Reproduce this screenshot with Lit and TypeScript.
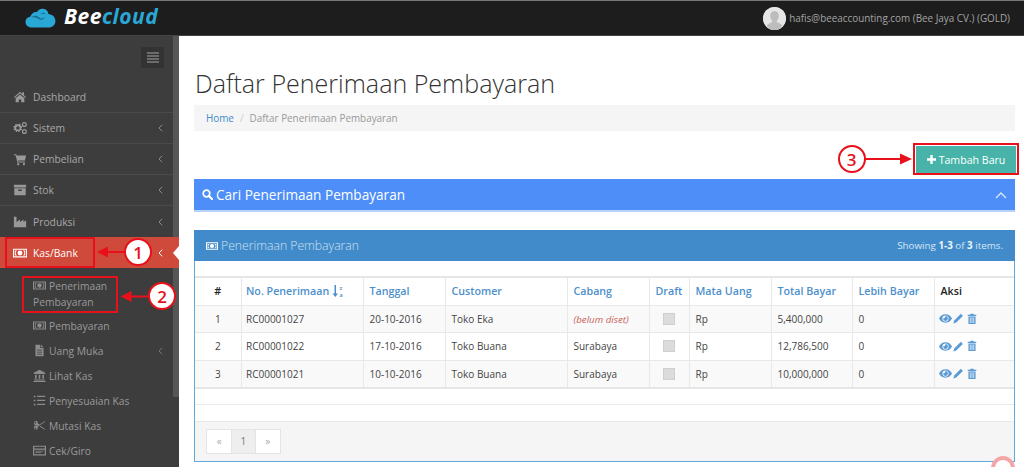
import { LitElement, html, css, svg } from "lit";
import { customElement } from "lit/decorators.js";

const ic = (vb: string, body: unknown, w = 14, h = 14) =>
  html`<svg class="ic" width=${w} height=${h} viewBox=${vb} fill="currentColor">${body}</svg>`;

const home = () => ic("0 0 16 16", svg`<path d="M8 2 1 8.200l.8.9L8 3.700l6.200 5.400.8-.9L12.500 6V2.500h-2v1.800zM3 9.500V14h3.600v-3.200h2.800V14H13V9.500L8 5.200z"/>`);
const cogs = () => ic("0 0 16 16", svg`<path fill-rule="evenodd" d="M5.500 3.500l1.200.3.8-.9 1.200.8-.4 1.100.8 1 1.200-.1.3 1.400-1.100.5-.1 1.200 1 .7-.7 1.200-1.200-.4-.9.8.1 1.200-1.400.3-.5-1.100H5l-.6 1.100-1.300-.4.1-1.200-.9-.8-1.100.5L.5 9.500l1-.8-.1-1.200L.3 7l.4-1.300 1.200.1.8-.9-.3-1.200 1.300-.5.6 1.100zM5.600 6a2 2 0 1 0 0 4 2 2 0 0 0 0-4z"/><circle cx="13" cy="4" r="2.200" fill="none" stroke="currentColor" stroke-width="1.400"/><circle cx="13" cy="12" r="2.200" fill="none" stroke="currentColor" stroke-width="1.400"/>`);
const cart = () => ic("0 0 16 16", svg`<path d="M1 2.500h2.600l.5 1.600H15l-1.400 5.600H5.700l.3 1.200h7.600v1.200H5L3 3.700H1z"/><circle cx="6" cy="14" r="1.300"/><circle cx="12.500" cy="14" r="1.300"/>`);
const archive = () => ic("0 0 16 16", svg`<path fill-rule="evenodd" d="M1 2h14v3H1zM1.500 6h13v8h-13zM6 7.500V9h4V7.500z"/>`);
const chart = () => ic("0 0 16 16", svg`<path d="M1 2h3v6l4-3v3l4-3v3l3-2v8H1z"/>`);
const money = () => ic("0 0 16 12", svg`<path fill-rule="evenodd" d="M0 1h16v10H0zM1.300 2.300v7.400h13.400V2.300zM8 3.200a2.800 2.800 0 1 1 0 5.600 2.800 2.800 0 0 1 0-5.600z"/><path d="M2.200 3.200h2.600a4 3.400 0 0 0 0 5.600H2.200zM11.200 3.200h2.600v5.600h-2.600a4 3.400 0 0 0 0-5.600z"/>`, 16, 12);
const file = () => ic("0 0 14 16", svg`<path fill-rule="evenodd" d="M2 1h6v4h4v10H2zM9 1l3 3H9zM4 7v1h6V7zm0 2.500v1h6v-1zM4 12v1h6v-1z"/>`);
const bank = () => ic("0 0 16 16", svg`<path d="M8 1 1 4.500V6h14V4.500zM2.500 7h2v5h-2zM7 7h2v5H7zM11.500 7h2v5h-2zM1.500 13h13v1.200h-13zM.5 14.800h15V16H.5z"/>`);
const list = () => ic("0 0 16 16", svg`<path d="M1 2h2v2H1zM5 2h10v1.600H5zM1 7h2v2H1zM5 7h10v1.600H5zM1 12h2v2H1zM5 12h10v1.600H5z"/>`);
const scissors = () => ic("0 0 16 16", svg`<path fill-rule="evenodd" d="M3.500 2a2.500 2.500 0 0 1 2.300 3.400L8 6.800l6-3.800h1.500L6 9.300l-.2.100.1.300A2.500 2.500 0 1 1 4.600 8.300L6.400 8 4.600 7.700A2.500 2.500 0 1 1 3.500 2zM3 3.500a1 1 0 1 0 0 2 1 1 0 0 0 0-2zm0 7a1 1 0 1 0 0 2 1 1 0 0 0 0-2zM9.500 8.500l6 4.500H14L8 9.300z"/>`);
const card = () => ic("0 0 16 14", svg`<path fill-rule="evenodd" d="M0 1h16v12H0zM1.500 2.500v2h13v-2zM1.500 6v5.500h13V6zM3 7.200h10v1H3zM3 9h7v1H3z"/>`);

const eye = () => ic("0 0 16 12", svg`<path fill-rule="evenodd" d="M8 .8C12 .8 14.800 3.400 16 6c-1.200 2.600-4 5.200-8 5.200S1.200 8.600 0 6C1.200 3.400 4 .8 8 .8zM8 2.200a3.800 3.800 0 1 0 0 7.600 3.800 3.800 0 0 0 0-7.600zM8 3a3 3 0 1 1-3 3c.5.400 3-.5 3-3z"/>`, 13, 11);
const pencil = () => ic("0 0 14 14", svg`<path d="M10.500.8 13.200 3.500 4.300 12.400.5 13.500l1.100-3.800z"/>`, 10.500, 11);
const trash = () => ic("0 0 14 16", svg`<path fill-rule="evenodd" d="M5 .8h4l.7 1.400H13v1.500H1V2.200h3.300zM2 4.500h10V15H2zM4 6v7.500h1V6zm2.500 0v7.500h1V6zM9 6v7.500h1V6z"/>`, 10, 12);
const chevL = () => html`<svg class="chev" width="5" height="8" viewBox="0 0 5 8"><path d="M4.200.7 1 4l3.200 3.300" fill="none" stroke="currentColor" stroke-width="1"/></svg>`;

const items = [
  { label: "Dashboard", icon: home, chev: false },
  { label: "Sistem", icon: cogs, chev: true },
  { label: "Pembelian", icon: cart, chev: true },
  { label: "Stok", icon: archive, chev: true },
  { label: "Produksi", icon: chart, chev: true },
];
const subs = [
  { label: "Pembayaran", icon: money, chev: false },
  { label: "Uang Muka", icon: file, chev: true },
  { label: "Lihat Kas", icon: bank, chev: false },
  { label: "Penyesuaian Kas", icon: list, chev: false },
  { label: "Mutasi Kas", icon: scissors, chev: false },
  { label: "Cek/Giro", icon: card, chev: false },
];
const rows = [
  { n: 1, no: "RC00001027", date: "20-10-2016", cust: "Toko Eka", cab: "", tot: "5,400,000" },
  { n: 2, no: "RC00001022", date: "17-10-2016", cust: "Toko Buana", cab: "Surabaya", tot: "12,786,500" },
  { n: 3, no: "RC00001021", date: "10-10-2016", cust: "Toko Buana", cab: "Surabaya", tot: "10,000,000" },
];

@customElement("app-root")
export class AppRoot extends LitElement {
  static styles = css`
    :host { display: block; position: relative; width: 1024px; height: 467px; overflow: hidden; background: #fff;
      font-family: "Open Sans", sans-serif; color: #333; font-size: 10.300px; }
    * { box-sizing: border-box; }
    .ic { display: block; flex: none; }
    .top { height: 36px; background: #1d1d1d; border-top: 1px solid #777; border-bottom: 1px solid #444; display: flex; align-items: center; padding: 0 14px 0 25px; }
    .logo { display: flex; align-items: center; gap: 8px; }
    .brand { font-size: 21px; font-weight: 700; font-style: italic; letter-spacing: .5px; color: #fff; line-height: 1; margin-top: -3px; }
    .brand span { color: #2aa7d5; }
    .user { margin-left: auto; display: flex; align-items: center; gap: 3px; color: #a3a3a3; font-size: 9.900px; }
    .avatar { width: 23px; height: 23px; border-radius: 50%; background: #ddd; overflow: hidden; }
    .wrap { display: flex; height: 431px; }
    .side { width: 179px; flex: none; background: #3d3d3d; display: flex; position: relative; }
    .rail { width: 173px; flex: none; color: #a8a8a8; }
    .bar { width: 6px; height: 361px; background: #565656; }
    .toggle { margin: 11px 0 14px 141px; width: 23px; height: 21px; background: #333; display: flex; flex-direction: column; gap: 1.500px; padding: 5px 5.500px; }
    .toggle i { display: block; height: 1.500px; background: #6c6c6c; }
    .nav { display: flex; align-items: center; height: 31px; padding: 0 10px 0 13px; border-bottom: 1px solid #4a4a4a; }
    .nav .ic { width: 14px; margin-right: 6px; color: #999; height: 14px; }
    .nav .chev { margin-left: auto; color: #8a8a8a; }
    .nav.last { border-bottom: none; }
    .active { width: 179px; background: #cf4a3a; color: #fff; border: none; padding-right: 16px; position: relative; }
    .active .ic { color: #fff; }
    .active .chev { color: #fff; }
    .notch { position: absolute; right: 0; top: 8.500px; width: 0; height: 0; border-top: 7px solid transparent; border-bottom: 7px solid transparent; border-right: 6px solid #fff; }
    .subs { padding-top: 6px; }
    .sub { display: flex; align-items: center; height: 25px; padding: 0 10px 0 33px; color: #9a9a9a; }
    .sub .ic { width: 13px; height: 13px; margin-right: 3px; color: #8c8c8c; }
    .sub .chev { margin-left: auto; color: #777; }
    .sub.two { display: block; height: 39px; padding: 4px 18px 0 33px; line-height: 16px; }
    .sub.two .ic { display: inline-block; vertical-align: -2px; }
    .main { flex: 1; padding: 31px 8px 0 15px; min-width: 0; }
    h1 { margin: 0 0 5px 1px; font-size: 25.050px; font-weight: 300; line-height: 33px; color: #333; }
    .crumb { height: 26px; margin-right: 1px; background: #f5f5f5; display: flex; align-items: center; padding: 0 12px; font-size: 9.900px; color: #999; gap: 6px; }
    .crumb a { color: #428bca; }
    .crumb .sep { color: #ccc; }
    .actions { display: flex; justify-content: flex-end; margin-top: 15px; }
    .add { width: 100px; height: 27px; background: #47b3a9; color: #fff; font-size: 10.600px; display: flex; align-items: center; justify-content: center; gap: 3px; }
    .search { margin: 6px 1px 0 0; height: 33px; background: #4d8ef8; border-bottom: 2px solid #b9d2f8; color: #fff; display: flex; align-items: center; padding: 0 8px; font-size: 13.600px; font-weight: 500; gap: 3px; }
    .search .up { margin-left: auto; }
    .panel { margin: 18px 1px 0 0; height: 232px; border: 1px solid #5fa9dc; border-top: none; display: flex; flex-direction: column; }
    .phead { height: 31px; background: #428bca; color: #cfe2f2; margin: 0 -1px; display: flex; align-items: center; padding: 0 12px; font-size: 12.200px; font-weight: 300; gap: 3px; flex: none; }
    .phead .mi { color: #fff; }
    .phead .mi .ic { width: 12px; height: 10px; }
    .phead .sum { margin-left: auto; font-size: 9.800px; font-weight: 400; color: #d6e6f4; }
    .phead b { font-weight: 700; color: #eef5fb; }
    .tbl { margin-top: 15px; flex: none; }
    table { border-collapse: collapse; width: 100%; table-layout: fixed; border-top: 2px solid #e6e6e6; border-bottom: 2px solid #e6e6e6; }
    th, td { border: 1px solid #e8e8e8; padding: 0 0 0 6px; font-size: 10px; text-align: left; white-space: nowrap; height: 27.500px; color: #444; }
    td.first, th.first { border-left: none; text-align: center; padding: 0; }
    tr > *:last-child { border-right: none; }
    th { height: 28px; font-size: 10.700px; font-weight: 600; color: #4d8fcc; }
    th.k { color: #222; }
    th.no, td.no { padding-left: 4.500px; }
    tbody tr:nth-child(odd) td { background: #f9f9f9; }
    .th-sort { display: inline-flex; align-items: center; gap: 3px; }
    td.nopad { padding: 0; }
    td.aksi { padding-left: 4px; }
    .red { color: #c9605a; font-style: italic; font-size: 9.700px; }
    .chk { display: block; margin: 0 auto; width: 12px; height: 12px; background: #dcdcdc; border: 1px solid #cfcfcf; }
    .acts { display: flex; color: #5b9bd5; align-items: center; }
    .acts .ic:nth-child(2) { margin: 0 3.500px 0 1.500px; }
    .foot { flex: 1; background: #f5f5f5; border-top: 1px solid #e8e8e8; padding: 7.500px 11px; }
    .gap1 { height: 16px; flex: none; border-bottom: 1px solid #eaeaea; }
    .gap2 { height: 16px; flex: none; }
    .pager { display: inline-flex; height: 24.500px; border: 1px solid #e4e4e4; background: #fff; color: #aaa; font-size: 10px; }
    .pager span { width: 24.300px; display: flex; align-items: center; justify-content: center; }
    .pager .cur { background: #eee; color: #777; border-left: 1px solid #e4e4e4; border-right: 1px solid #e4e4e4; }
    .box { position: absolute; border: 2px solid #e8101a; pointer-events: none; z-index: 5; }
    .num { position: absolute; z-index: 7; width: 28px; height: 28px; border-radius: 50%; border: 2.300px solid #e8101a; background: #fff; color: #e8101a; font-size: 17px; font-weight: 600; display: flex; align-items: center; justify-content: center; line-height: 1; }
    .over { position: absolute; left: 0; top: 0; pointer-events: none; z-index: 6; }
    .n1 { left: 124px; top: 238px; }
    .n2 { left: 148px; top: 282px; }
    .n3 { left: 837.500px; top: 145px; }
    .b1 { left: 5px; top: 237px; width: 90px; height: 31px; }
    .b2 { left: 22px; top: 276px; width: 96px; height: 37px; }
    .b3 { left: 913px; top: 143px; width: 106px; height: 32px; }
  `;

  render() {
    return html`
      <div class="top">
        <div class="logo">
          <svg width="31" height="20" viewBox="0 0 31 20"><path d="M7 19.500C3 19.500.500 17 .500 14c0-3 2.300-5 4.800-5.200C6.500 5.500 9 3.500 12 4c1-2 3-3.500 6-3.300 3.200.2 5.200 2.600 5.400 5.300 3.800.3 7 3 7 7 0 4-3 6.500-7 6.500z" fill="#29a8d6"/><path d="M6 9.500c3-2.500 6-2.500 8 0 2 1.500 4 1 6-.5-1.500 3-4.500 3.500-6.500 2-2.500-1.500-5-2-7.500-1.500zM15 5.500c2-1 4.500-1 5.500.5-1.500-.2-3.500 0-5.500-.5z" fill="#1c6d90"/></svg>
          <div class="brand">Bee<span>cloud</span></div>
        </div>
        <div class="user">
          <div class="avatar"><svg width="23" height="23" viewBox="0 0 23 23"><circle cx="11.500" cy="11.500" r="11.500" fill="#e6e6e6"/><path d="M11.500 4c2.800 0 4.300 2.200 4.300 5 0 2-1 3.800-2 4.800v1.500c2 .8 4.500 1.500 5.500 3.500L15 23H8l-4.300-4.200c1-2 3.500-2.700 5.500-3.500v-1.500c-1-1-2-2.800-2-4.800 0-2.800 1.500-5 4.300-5z" fill="#bdbdbd"/></svg></div>
          <span>hafis@beeaccounting.com (Bee Jaya CV.) (GOLD)</span>
        </div>
      </div>
      <div class="wrap">
        <div class="side">
          <div class="rail">
            <div class="toggle"><i></i><i></i><i></i><i></i></div>
            ${items.map((i, idx) => html`<div class="nav ${idx === 4 ? "last" : ""}">${i.icon()}<span>${i.label}</span>${i.chev ? chevL() : ""}</div>`)}
            <div class="nav active">${money()}<span>Kas/Bank</span>${chevL()}<div class="notch"></div></div>
            <div class="subs">
              <div class="sub two">${money()}Penerimaan Pembayaran</div>
              ${subs.map((s) => html`<div class="sub">${s.icon()}<span>${s.label}</span>${s.chev ? chevL() : ""}</div>`)}
            </div>
          </div>
          <div class="bar"></div>
        </div>
        <div class="main">
          <h1>Daftar Penerimaan Pembayaran</h1>
          <div class="crumb"><a>Home</a><span class="sep">/</span><span>Daftar Penerimaan Pembayaran</span></div>
          <div class="actions"><div class="add"><svg width="9" height="9" viewBox="0 0 10 10"><path d="M3.700 0h2.600v3.700H10v2.600H6.300V10H3.700V6.300H0V3.700h3.700z" fill="#fff"/></svg>Tambah Baru</div></div>
          <div class="search">
            <svg width="11" height="11" viewBox="0 0 11 11"><circle cx="4.500" cy="4.500" r="3.300" fill="none" stroke="#fff" stroke-width="1.700"/><path d="M7 7l3 3" stroke="#fff" stroke-width="2.200" stroke-linecap="round"/></svg>
            <span>Cari Penerimaan Pembayaran</span>
            <svg class="up" width="12" height="8" viewBox="0 0 12 8"><path d="M1 7l5-5 5 5" fill="none" stroke="#dbe8fd" stroke-width="1.400"/></svg>
          </div>
          <div class="panel">
            <div class="phead"><span class="mi">${money()}</span><span>Penerimaan Pembayaran</span><span class="sum">Showing <b>1-3</b> of <b>3</b> items.</span></div>
            <div class="tbl">
              <table>
                <colgroup><col style="width:46px"/><col style="width:122px"/><col style="width:82px"/><col style="width:122px"/><col style="width:82px"/><col style="width:40px"/><col style="width:82px"/><col style="width:81px"/><col style="width:82px"/><col/></colgroup>
                <thead><tr>
                  <th class="k first">#</th>
                  <th class="no"><span class="th-sort">No. Penerimaan <svg width="12" height="12" viewBox="0 0 12 12"><path d="M2.500 0h1.500v8.500H6L3.250 12 .5 8.500h2z" fill="#4d8fcc"/><text x="7.500" y="5" font-size="5.500" fill="#4d8fcc" font-family="Open Sans">z</text><text x="7.500" y="11.500" font-size="5.500" fill="#4d8fcc" font-family="Open Sans">a</text></svg></span></th>
                  <th>Tanggal</th><th>Customer</th><th>Cabang</th><th>Draft</th><th>Mata Uang</th><th>Total Bayar</th><th>Lebih Bayar</th><th class="k">Aksi</th>
                </tr></thead>
                <tbody>
                  ${rows.map((r) => html`<tr>
                    <td class="first">${r.n}</td><td class="no">${r.no}</td><td>${r.date}</td><td>${r.cust}</td>
                    <td>${r.cab || html`<span class="red">(belum diset)</span>`}</td>
                    <td class="nopad"><span class="chk"></span></td><td>Rp</td><td>${r.tot}</td><td>0</td>
                    <td class="aksi"><div class="acts">${eye()}${pencil()}${trash()}</div></td>
                  </tr>`)}
                </tbody>
              </table>
            </div>
            <div class="gap1"></div>
            <div class="gap2"></div>
            <div class="foot"><div class="pager"><span>«</span><span class="cur">1</span><span>»</span></div></div>
          </div>
        </div>
      </div>
      <div class="box b1"></div>
      <div class="box b2"></div>
      <div class="box b3"></div>
      <svg class="over" width="1024" height="467" viewBox="0 0 1024 467">
        <g stroke="#e8101a" stroke-width="2" fill="#e8101a">
          <path d="M125 252H104"/><path d="M97 252l11-5.500v11z" stroke="none"/>
          <path d="M149 296.500H130"/><path d="M120.500 296.500l11-5.500v11z" stroke="none"/>
          <path d="M865 159h40"/><path d="M912 159l-12-5.500v11z" stroke="none"/>
        </g>
        <circle cx="1003" cy="468" r="10" fill="#fff" stroke="#f4a6a6" stroke-width="4"/>
      </svg>
      <div class="num n1">1</div>
      <div class="num n2">2</div>
      <div class="num n3">3</div>
    `;
  }
}
